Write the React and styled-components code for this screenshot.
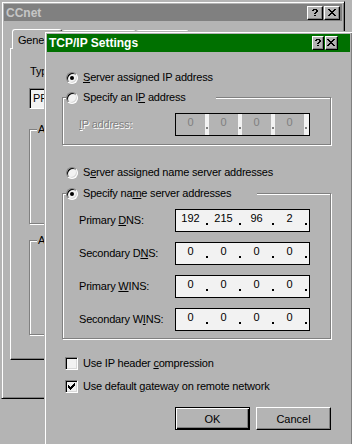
import React from "react";
import styled, { createGlobalStyle, css } from "styled-components";

const FACE = "#b4b4b4";
const LIGHT = "#f2f2f2";
const SHADOW = "#808080";
const DARK = "#000";

const GlobalStyle = createGlobalStyle`
  html, body { margin: 0; padding: 0; background: ${FACE}; overflow: hidden; }
  body {
    font-family: "Liberation Sans", Arial, sans-serif;
    font-size: 11px;
    letter-spacing: -0.2px;
    color: #000;
  }
`;

const Desktop = styled.div`
  position: relative;
  width: 352px;
  height: 444px;
  overflow: hidden;
  background: ${FACE};
`;

const Window = styled.div`
  position: absolute;
  z-index: ${(p) => p.$z};
  left: ${(p) => p.$x}px;
  top: ${(p) => p.$y}px;
  width: ${(p) => p.$w}px;
  height: ${(p) => p.$h}px;
  box-sizing: border-box;
  border: 1px solid;
  border-color: ${FACE} ${DARK} ${DARK} ${FACE};
  box-shadow: inset 1px 1px 0 #fff, inset -1px -1px 0 ${SHADOW};
  padding: 2px;
  background: ${FACE};
  display: flex;
  flex-direction: column;
`;

const TitleBar = styled.div`
  flex: none;
  height: ${(p) => p.$h}px;
  display: flex;
  align-items: center;
  padding: 0 ${(p) => p.$pr}px 0 2px;
  background: ${(p) => (p.$active ? "#007000" : SHADOW)};
  color: ${(p) => (p.$active ? "#fff" : "#c6c6c6")};
`;

const TitleText = styled.span`
  flex: 1;
  font-size: 12px;
  font-weight: bold;
  letter-spacing: 0;
  white-space: nowrap;
`;

const CaptionButtons = styled.div`
  display: flex;
  gap: 1px;
`;

const CaptionButton = styled.div`
  width: ${(p) => p.$w}px;
  height: 14px;
  box-sizing: border-box;
  background: ${FACE};
  border: 1px solid;
  border-color: #fff ${DARK} ${DARK} #fff;
  box-shadow: inset -1px -1px 0 ${SHADOW};
  display: flex;
  align-items: center;
  justify-content: center;
  padding: 0 1px 1px 0;
`;

const PixelSvg = styled.svg`
  display: block;
`;

const Glyph = ({ rows }) => (
  <PixelSvg width={rows[0].length} height={rows.length} shapeRendering="crispEdges">
    {rows.flatMap((r, y) =>
      [...r].map((c, x) =>
        c === "X" ? <rect key={`${x}-${y}`} x={x} y={y} width="1" height="1" fill="#000" /> : null
      )
    )}
  </PixelSvg>
);

const HELP = [
  ".XXXX.",
  "XX..XX",
  "....XX",
  "...XX.",
  "..XX..",
  "......",
  "..XX..",
];

const CLOSE = [
  "XX....XX",
  ".XX..XX.",
  "..XXXX..",
  "...XX...",
  "..XXXX..",
  ".XX..XX.",
  "XX....XX",
];

const CHECK = [
  "......X",
  ".....XX",
  "X...XXX",
  "XX.XXX.",
  "XXXXX..",
  ".XXX...",
  "..X....",
];

/* ---------- back window (CCnet) ---------- */

const BackBody = styled.div`
  flex: 1;
  display: flex;
  flex-direction: column;
  padding: 0 5px 0 6px;
`;

const TabRow = styled.div`
  height: 27px;
  flex: none;
  display: flex;
  align-items: flex-end;
  padding-left: 2px;
`;

const Tab = styled.div`
  position: relative;
  z-index: 1;
  box-sizing: border-box;
  height: ${(p) => (p.$selected ? 20 : 18)}px;
  margin-bottom: ${(p) => (p.$selected ? -1 : 0)}px;
  padding: 0 5px;
  display: flex;
  align-items: center;
  background: ${FACE};
  border-top: 1px solid #fff;
  border-left: 1px solid #fff;
  border-right: 1px solid ${DARK};
  border-radius: 3px 3px 0 0;
  box-shadow: inset -1px 0 0 ${SHADOW};
  white-space: nowrap;
`;

const TabPanel = styled.div`
  height: 312px;
  flex: none;
  box-sizing: border-box;
  border: 1px solid;
  border-color: #fff ${DARK} ${DARK} #fff;
  box-shadow: inset -1px -1px 0 ${SHADOW};
  padding: 16px 0 0 18px;
  display: flex;
  flex-direction: column;
  align-items: flex-start;
`;

const PlainLabel = styled.div`
  height: 13px;
  line-height: 13px;
  margin-left: 1px;
  white-space: nowrap;
`;

const SelectBox = styled.div`
  margin-top: 10px;
  width: 282px;
  height: 21px;
  box-sizing: border-box;
  border: 1px solid;
  border-color: ${SHADOW} #fff #fff ${SHADOW};
  box-shadow: inset 1px 1px 0 ${DARK};
  background: ${LIGHT};
  display: flex;
  align-items: center;
  padding-left: 3px;
  white-space: nowrap;
`;

const SelectText = styled.span`
  flex: 1;
  line-height: 13px;
`;

const ArrowButton = styled.div`
  width: 16px;
  height: 17px;
  box-sizing: border-box;
  background: ${FACE};
  border: 1px solid;
  border-color: #fff ${DARK} ${DARK} #fff;
  box-shadow: inset -1px -1px 0 ${SHADOW};
  margin-right: 1px;
`;

const GroupBox = styled.div`
  box-sizing: border-box;
  width: ${(p) => p.$w}px;
  height: ${(p) => (p.$h ? `${p.$h}px` : "auto")};
  margin: ${(p) => p.$mt}px 0 0 ${(p) => p.$ml}px;
  padding-bottom: ${(p) => p.$pb || 0}px;
  border: 1px solid ${SHADOW};
  box-shadow: inset 1px 1px 0 #fff, 1px 1px 0 #fff;
  display: flex;
  flex-direction: column;
  align-items: flex-start;
  flex: none;
`;

const GroupTitle = styled.div`
  margin: -7px 0 0 ${(p) => p.$ml}px;
  height: 13px;
  line-height: 13px;
  padding: 0 1px;
  background: ${FACE};
  white-space: nowrap;
`;

/* ---------- front window (TCP/IP Settings) ---------- */

const DialogBody = styled.div`
  flex: 1;
  display: flex;
  flex-direction: column;
  align-items: flex-start;
`;

const OptionRow = styled.label`
  display: flex;
  align-items: center;
  gap: 5px;
  height: 13px;
  line-height: 13px;
  margin: ${(p) => p.$mt}px 0 0 ${(p) => p.$ml}px;
  width: ${(p) => (p.$w ? `${p.$w}px` : "auto")};
  white-space: nowrap;
  flex: none;
  ${(p) =>
    p.$legend &&
    css`
      background: ${FACE};
    `}
`;

const Radio = styled.span`
  width: 12px;
  height: 12px;
  box-sizing: border-box;
  flex: none;
  border-radius: 50%;
  border: 1px solid;
  border-color: ${SHADOW} #fff #fff ${SHADOW};
  box-shadow: inset 1px 1px 0 ${DARK}, inset -1px -1px 0 #d8d8d8;
  background: ${LIGHT};
  display: flex;
  align-items: center;
  justify-content: center;
  &::after {
    content: "";
    width: 4px;
    height: 4px;
    border-radius: 50%;
    background: #000;
    display: ${(p) => (p.$checked ? "block" : "none")};
  }
`;

const CheckBox = styled.span`
  width: 13px;
  height: 13px;
  box-sizing: border-box;
  flex: none;
  border: 1px solid;
  border-color: ${SHADOW} #fff #fff ${SHADOW};
  box-shadow: inset 1px 1px 0 ${DARK}, inset -1px -1px 0 #d8d8d8;
  background: ${LIGHT};
  display: flex;
  align-items: center;
  justify-content: center;
`;

const FieldRow = styled.div`
  display: flex;
  align-items: center;
  height: 23px;
  margin: ${(p) => p.$mt}px 0 0 16px;
  flex: none;
`;

const FieldLabel = styled.span`
  width: 96px;
  line-height: 13px;
  white-space: nowrap;
  color: ${(p) => (p.$disabled ? SHADOW : "#000")};
  text-shadow: ${(p) => (p.$disabled ? "1px 1px 0 #fff" : "none")};
`;

const IPBox = styled.div`
  width: 135px;
  height: 23px;
  box-sizing: border-box;
  border: 1px solid ${DARK};
  background: ${LIGHT};
  display: flex;
  flex: none;
`;

const IPPart = styled.div`
  width: 29px;
  height: 100%;
  box-sizing: border-box;
  padding-top: 2px;
  text-align: center;
  line-height: 13px;
  letter-spacing: 0;
  background: ${(p) => (p.$disabled ? FACE : "transparent")};
  color: ${(p) => (p.$disabled ? SHADOW : "#000")};
`;

const IPDot = styled.div`
  width: 4px;
  height: 100%;
  display: flex;
  justify-content: center;
  &::after {
    content: "";
    width: 2px;
    height: 2px;
    margin-top: 13px;
    background: ${(p) => (p.$disabled ? SHADOW : "#000")};
  }
`;

const ButtonRow = styled.div`
  display: flex;
  gap: 6px;
  margin-top: ${(p) => p.$mt}px;
  padding-left: ${(p) => p.$pl || 0}px;
  justify-content: ${(p) => (p.$end ? "flex-end" : "flex-start")};
  flex: none;
`;

const PushButton = styled.button`
  width: 75px;
  height: 23px;
  box-sizing: border-box;
  margin: 0;
  padding: 0;
  font: inherit;
  letter-spacing: 0;
  color: #000;
  background: ${FACE};
  border: 1px solid;
  border-color: #fff ${DARK} ${DARK} #fff;
  box-shadow: inset -1px -1px 0 ${SHADOW};
  ${(p) =>
    p.$default &&
    css`
      border-color: ${DARK};
      box-shadow: inset 1px 1px 0 #fff, inset -1px -1px 0 ${DARK}, inset -2px -2px 0 ${SHADOW};
    `}
`;

const IPAddress = ({ parts, disabled }) => (
  <IPBox>
    {parts.map((v, i) => (
      <React.Fragment key={i}>
        <IPPart $disabled={disabled}>{v}</IPPart>
        <IPDot $disabled={disabled} />
      </React.Fragment>
    ))}
  </IPBox>
);

const Option = ({ checked, children, ...rest }) => (
  <OptionRow {...rest}>
    <Radio $checked={checked} />
    <span>{children}</span>
  </OptionRow>
);

const Check = ({ checked, children, ...rest }) => (
  <OptionRow {...rest}>
    <CheckBox>{checked && <Glyph rows={CHECK} />}</CheckBox>
    <span>{children}</span>
  </OptionRow>
);

export default function App() {
  return (
    <Desktop>
      <GlobalStyle />

      <Window $z={1} $x={1} $y={1} $w={344} $h={398}>
        <TitleBar $h={17} $pr={2}>
          <TitleText>CCnet</TitleText>
          <CaptionButtons>
            <CaptionButton $w={16}>
              <Glyph rows={HELP} />
            </CaptionButton>
            <CaptionButton $w={16}>
              <Glyph rows={CLOSE} />
            </CaptionButton>
          </CaptionButtons>
        </TitleBar>
        <BackBody>
          <TabRow>
            <Tab $selected>General</Tab>
            <Tab>Server Types</Tab>
            <Tab>Scripting</Tab>
          </TabRow>
          <TabPanel>
            <PlainLabel>Type of Dial-Up Server:</PlainLabel>
            <SelectBox>
              <SelectText>PPP: Windows 95, Windows NT 3.5, Internet</SelectText>
              <ArrowButton />
            </SelectBox>
            <GroupBox $w={290} $h={95} $mt={20} $ml={0}>
              <GroupTitle $ml={7}>Advanced options:</GroupTitle>
            </GroupBox>
            <GroupBox $w={290} $h={95} $mt={16} $ml={0}>
              <GroupTitle $ml={7}>Allowed network protocols:</GroupTitle>
            </GroupBox>
          </TabPanel>
          <ButtonRow $mt={8} $end>
            <PushButton>OK</PushButton>
            <PushButton>Cancel</PushButton>
          </ButtonRow>
        </BackBody>
      </Window>

      <Window $z={2} $x={44} $y={31} $w={309} $h={420}>
        <TitleBar $active $h={18} $pr={12}>
          <TitleText>TCP/IP Settings</TitleText>
          <CaptionButtons>
            <CaptionButton $w={12}>
              <Glyph rows={HELP} />
            </CaptionButton>
            <CaptionButton $w={13}>
              <Glyph rows={CLOSE} />
            </CaptionButton>
          </CaptionButtons>
        </TitleBar>
        <DialogBody>
          <Option checked $mt={19} $ml={19}>
            <u>S</u>erver assigned IP address
          </Option>
          <GroupBox $w={269} $mt={13} $ml={15} $pb={8}>
            <Option $legend $mt={-7} $ml={3} $w={150}>
              Specify an I<u>P</u> address
            </Option>
            <FieldRow $mt={9}>
              <FieldLabel $disabled>
                <u>I</u>P address:
              </FieldLabel>
              <IPAddress disabled parts={["0", "0", "0", "0"]} />
            </FieldRow>
          </GroupBox>
          <Option $mt={21} $ml={19}>
            S<u>e</u>rver assigned name server addresses
          </Option>
          <GroupBox $w={269} $mt={14} $ml={15} $pb={7}>
            <Option checked $legend $mt={-7} $ml={3} $w={191}>
              Specify na<u>m</u>e server addresses
            </Option>
            <FieldRow $mt={9}>
              <FieldLabel>
                Primary <u>D</u>NS:
              </FieldLabel>
              <IPAddress parts={["192", "215", "96", "2"]} />
            </FieldRow>
            <FieldRow $mt={10}>
              <FieldLabel>
                Secondary D<u>N</u>S:
              </FieldLabel>
              <IPAddress parts={["0", "0", "0", "0"]} />
            </FieldRow>
            <FieldRow $mt={10}>
              <FieldLabel>
                Primary <u>W</u>INS:
              </FieldLabel>
              <IPAddress parts={["0", "0", "0", "0"]} />
            </FieldRow>
            <FieldRow $mt={10}>
              <FieldLabel>
                Secondary W<u>I</u>NS:
              </FieldLabel>
              <IPAddress parts={["0", "0", "0", "0"]} />
            </FieldRow>
          </GroupBox>
          <Check $mt={18} $ml={18}>
            Use IP header <u>c</u>ompression
          </Check>
          <Check checked $mt={10} $ml={18}>
            Use default <u>g</u>ateway on remote network
          </Check>
          <ButtonRow $mt={14} $pl={128}>
            <PushButton $default>OK</PushButton>
            <PushButton>Cancel</PushButton>
          </ButtonRow>
        </DialogBody>
      </Window>
    </Desktop>
  );
}
